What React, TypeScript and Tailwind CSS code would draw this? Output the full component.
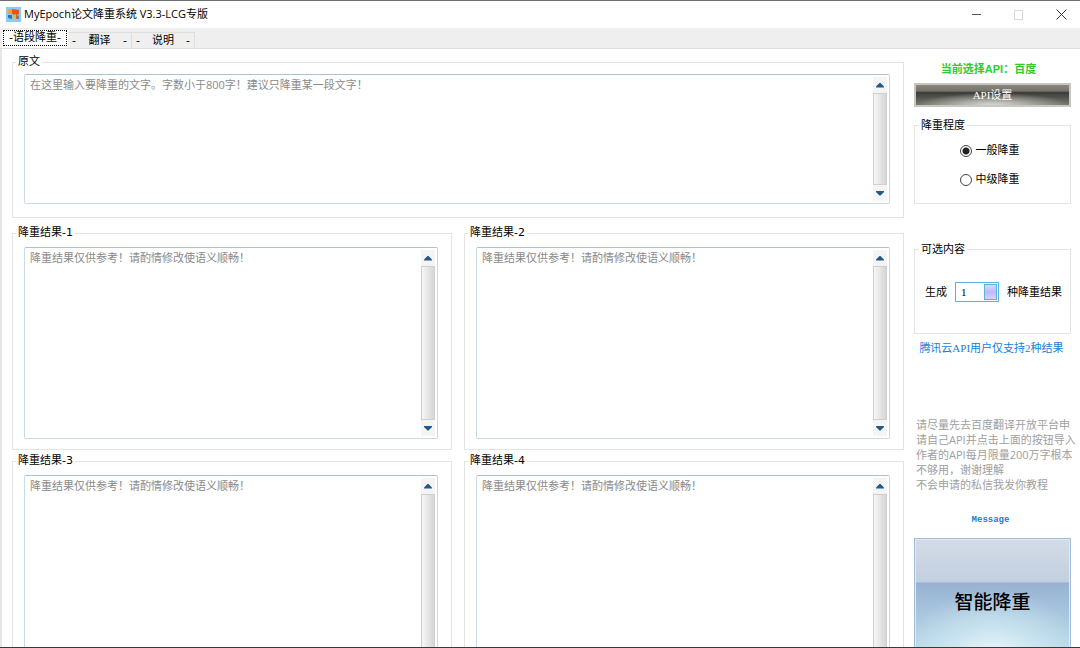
import { useState } from "react";

const sans = "font-['Open_Sans','Noto_Sans_CJK_SC',sans-serif]";
const serif = "font-['Liberation_Serif','Noto_Sans_CJK_SC',serif]";
const wide = "font-['DejaVu_Sans','Noto_Sans_CJK_SC',sans-serif]";

function Arrow({ down }: { down?: boolean }) {
  return (
    <svg width="10" height="6" viewBox="0 0 10 6" fill="#1f5a8c">
      {down ? <path d="M1 1h8v1L5.500 5.500h-1L1 2z" /> : <path d="M1 5.500h8v-1L5.500 1h-1L1 4.500z" />}
    </svg>
  );
}

function ScrollBar() {
  return (
    <div className="flex w-[14px] shrink-0 flex-col bg-[#f4f4f4]">
      <button type="button" aria-label="向上滚动" className="flex h-4 items-center justify-center">
        <Arrow />
      </button>
      <div className="flex-1 border border-[#cfcfcf] bg-linear-to-r from-[#f6f6f6] via-[#e6e6e6] to-[#d6d6d6]"></div>
      <button type="button" aria-label="向下滚动" className="flex h-4 items-center justify-center">
        <Arrow down />
      </button>
    </div>
  );
}

function TextGroup({ title, hint, box }: { title: string; hint: string; box: string }) {
  return (
    <fieldset className="min-w-0 border border-[#e4e4e4] pr-[13px] pl-[11px]">
      <legend className={"-ml-2 px-[2px] leading-4 text-black " + wide}>{title}</legend>
      <div className={"flex rounded-[2px] border border-[#c6dae8] border-t-[#a9c3d2] p-[2px] " + box}>
        <textarea
          aria-label={title}
          placeholder={hint}
          className="min-w-0 flex-1 resize-none overflow-hidden px-[3px] leading-4 outline-none placeholder:text-[#8a8a8a]"
        />
        <ScrollBar />
      </div>
    </fieldset>
  );
}

function TitleBar() {
  return (
    <header className="flex h-7 shrink-0 items-center border-t border-[#6e6e6e] bg-white pl-[6px]">
      <svg width="15" height="15" viewBox="0 0 15 15">
        <rect width="15" height="15" fill="#8ecbee" />
        <path d="M2 3l4-1v5H2z" fill="#f5a13a" />
        <path d="M2 8h4v4l-4-1z" fill="#2877b8" />
        <path d="M6 2l7 1v4l-2 1v4l-4-1V7H6z" fill="#e8541c" />
        <path d="M7 8l3-1v5H7z" fill="#f8b62d" />
        <path d="M11 9l2-1v4h-2z" fill="#3c8dcc" />
      </svg>
      <h1 className="ml-[3px] flex-1 text-[11px] text-black">MyEpoch论文降重系统 V3.3-LCG专版</h1>
      <div className="flex h-full gap-1">
        <button type="button" aria-label="最小化" className="flex w-[38px] items-center justify-center">
          <svg width="10" height="10" viewBox="0 0 10 10" stroke="#555">
            <path d="M0 4.500h9" />
          </svg>
        </button>
        <button type="button" aria-label="最大化" disabled className="flex w-[38px] items-center justify-center">
          <svg width="10" height="10" viewBox="0 0 10 10" fill="none" stroke="#d9d9d9">
            <rect x=".5" y=".5" width="8" height="9" />
          </svg>
        </button>
        <button type="button" aria-label="关闭" className="flex w-[38px] items-center justify-center">
          <svg width="11" height="11" viewBox="0 0 11 11" stroke="#333">
            <path d="M.5.5l10 10M10.500.5l-10 10" />
          </svg>
        </button>
      </div>
    </header>
  );
}

function Tabs() {
  return (
    <nav
      role="tablist"
      className={"flex h-[21px] shrink-0 items-end border-b border-[#dedede] bg-[#efefef] pl-[2px] text-black " + wide}
    >
      <button type="button" role="tab" aria-selected="true" className="h-[18px] w-[66px] bg-white px-px pb-[2px]">
        <span className="flex h-4 items-center justify-center border border-dotted border-black leading-4">-语段降重-</span>
      </button>
      <button type="button" role="tab" aria-selected="false" className="flex h-4 w-16 items-center justify-between border-t border-r border-[#dedede] px-1 leading-4">
        <span>-</span><span>翻译</span><span>-</span>
      </button>
      <button type="button" role="tab" aria-selected="false" className="flex h-4 w-[63px] items-center justify-between border-t border-r border-[#dedede] px-1 leading-4">
        <span>-</span><span>说明</span><span>-</span>
      </button>
    </nav>
  );
}

function Level({ label, checked, onChange }: { label: string; checked: boolean; onChange: () => void }) {
  return (
    <label className="flex h-[29px] items-center gap-1">
      <input
        type="radio"
        name="level"
        checked={checked}
        onChange={onChange}
        className="size-3 appearance-none rounded-full border border-[#444] bg-white checked:bg-[radial-gradient(circle,#222_3px,#fff_4px)]"
      />
      {label}
    </label>
  );
}

function SidePanel() {
  const [level, setLevel] = useState("一般降重");
  return (
    <aside className="flex w-[157px] shrink-0 flex-col pt-3">
      <p className="pr-2 text-center font-['Liberation_Sans','Noto_Sans_CJK_SC',sans-serif] leading-4 font-bold text-[#2fcb2f]">
        当前选择API：百度
      </p>
      <button
        type="button"
        className={"mt-[6px] h-6 shrink-0 border-2 border-[#c6c7c2] bg-[radial-gradient(ellipse_50%_60%_at_50%_100%,#d8d8d2_0%,#9b9b9500_100%),linear-gradient(#8d887c_0%,#77736b_30%,#3c3b3a_38%,#77796c_100%)] leading-4 text-white " + serif}
      >
        API设置
      </button>

      <fieldset className="mt-[10px] h-[87px] shrink-0 border border-[#e4e4e4] text-black">
        <legend className="ml-1 px-[2px] leading-4">降重程度</legend>
        <div className="flex flex-col items-center pt-[3px] pr-[6px]">
          {["一般降重", "中级降重"].map((l) => (
            <Level key={l} label={l} checked={level === l} onChange={() => setLevel(l)} />
          ))}
        </div>
      </fieldset>

      <fieldset className="mt-[37px] h-[93px] shrink-0 border border-[#e4e4e4] text-black">
        <legend className="ml-1 px-[2px] leading-4">可选内容</legend>
        <div className="flex items-center gap-2 pt-[25px] pl-[10px] whitespace-nowrap">
          <label htmlFor="count">生成</label>
          <div className="flex h-5 w-11 border border-[#5db2e4] bg-white p-px">
            <input
              id="count"
              type="text"
              defaultValue="1"
              className={"w-7 min-w-0 pl-1 outline-none " + serif}
            />
            <button
              type="button"
              aria-label="选择数量"
              className="w-[13px] shrink-0 border border-[#5db2e4] bg-linear-to-b from-[#dcd6fb] via-[#bdb9fb] to-[#d6d2fc]"
            ></button>
          </div>
          <span>种降重结果</span>
        </div>
      </fieldset>

      <p className={"mt-[6px] pr-[2px] text-center leading-4 whitespace-nowrap text-[#1182dc] " + serif}>
        腾讯云API用户仅支持2种结果
      </p>
      <p className="mt-[61px] ml-[2px] leading-[15px] whitespace-nowrap text-[#a0a0a0]">
        请尽量先去百度翻译开放平台申
        <br />
        请自己API并点击上面的按钮导入
        <br />
        作者的API每月限量200万字根本
        <br />
        不够用，谢谢理解
        <br />
        不会申请的私信我发你教程
      </p>
      <a href="#message" className="mt-5 pr-1 self-center font-['Liberation_Mono',monospace] text-[9px] leading-4 font-bold text-[#1182dc]">
        Message
      </a>
      <button
        type="button"
        className="mt-[10px] h-32 shrink-0 border border-[#a3bedb] bg-[radial-gradient(ellipse_60%_60%_at_50%_100%,#f4fbfd_0%,#d5edf5aa_50%,#d5edf500_100%),linear-gradient(#d3dce6_0%,#c3cfdf_34%,#97b2d3_35%,#a9c6de_60%,#bfe2ee_100%)] text-[19px] font-medium text-black inset-ring inset-ring-[#dfe9f3]"
      >
        智能降重
      </button>
    </aside>
  );
}

export default function App() {
  const hint = "降重结果仅供参考！请酌情修改使语义顺畅！";
  return (
    <div className={"flex h-screen flex-col overflow-hidden border-b border-[#3a3a3a] bg-white text-[11px] " + sans}>
      <TitleBar />
      <Tabs />
      <div className="flex min-h-0 flex-1 gap-[10px] overflow-hidden border-l-2 border-[#e6e6e6] pr-[9px] pl-[10px]">
        <main className="min-w-0 flex-1 pt-[5px]">
          <TextGroup
            title="原文"
            hint="在这里输入要降重的文字。字数小于800字！建议只降重某一段文字！"
            box="mt-1 mb-[13px] h-[130px]"
          />
          <div className="mt-[7px] grid grid-cols-2 gap-x-3 gap-y-[3px]">
            {[1, 2, 3, 4].map((n) => (
              <TextGroup key={n} title={"降重结果-" + n} hint={hint} box="mt-[6px] mb-[10px] h-48" />
            ))}
          </div>
        </main>
        <SidePanel />
      </div>
    </div>
  );
}
